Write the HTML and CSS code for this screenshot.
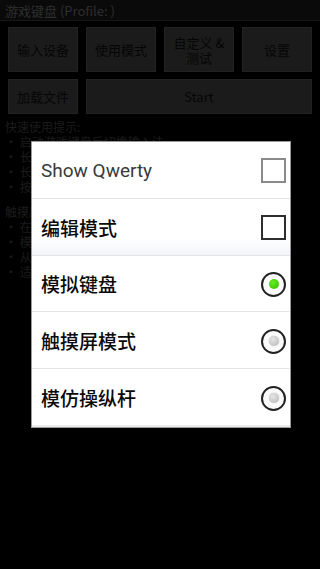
FILE: index.html
```html
<!DOCTYPE html>
<html>
<head>
<meta charset="utf-8">
<link rel="stylesheet" href="styles.css">
</head>
<body>
<div class="app">
  <div class="titlebar">游戏键盘 (Profile: )</div>
  <div class="buttons">
    <div class="row">
      <div class="btn">输入设备</div>
      <div class="btn">使用模式</div>
      <div class="btn">自定义 &amp;<br>测试</div>
      <div class="btn">设置</div>
    </div>
    <div class="row row2">
      <div class="btn">加载文件</div>
      <div class="btn wide">Start</div>
    </div>
  </div>
  <div class="hints">
    <div class="hline">快速使用提示:</div>
    <div class="hline">• 启动游戏键盘后切换输入法</div>
    <div class="hline">• 长按屏幕按键可以编辑</div>
    <div class="hline">• 长按菜单键显示隐藏键盘</div>
    <div class="hline">• 按返回键退出</div>
    <div class="hline gap">触摸屏模式:</div>
    <div class="hline">• 在屏幕上设置触摸点 (需要root权限)</div>
    <div class="hline">• 模拟触摸屏操作</div>
    <div class="hline">• 从设置中选择</div>
    <div class="hline">• 适用于部分游戏</div>
  </div>
</div>

<div class="dialog">
  <div class="item">
    <span class="label latin">Show Qwerty</span>
    <span class="check light"></span>
  </div>
  <div class="item tint">
    <span class="label">编辑模式</span>
    <span class="check dark"></span>
  </div>
  <div class="item">
    <span class="label">模拟键盘</span>
    <span class="radio on"><span class="dot"></span></span>
  </div>
  <div class="item">
    <span class="label">触摸屏模式</span>
    <span class="radio"><span class="dot"></span></span>
  </div>
  <div class="item last">
    <span class="label">模仿操纵杆</span>
    <span class="radio"><span class="dot"></span></span>
  </div>
</div>
</body>
</html>
```
FILE: styles.css
```css
* { box-sizing: border-box; }
html, body {
  margin: 0;
  padding: 0;
  width: 320px;
  height: 569px;
  background: #000;
  overflow: hidden;
  font-family: "Noto Sans CJK SC", "Noto Sans", sans-serif;
}
.app {
  width: 320px;
  height: 569px;
  background: #000;
}
.titlebar {
  height: 21px;
  padding: 2px 0 0 5px;
  font-size: 13px;
  line-height: 17px;
  color: #2e2e2e;
  background: #0a0a0a;
  border-bottom: 1px solid #161616;
}
.buttons {
  padding: 6px 8px 0 8px;
  display: flex;
  flex-direction: column;
  gap: 7px;
}
.row {
  display: flex;
  gap: 8px;
  height: 45px;
}
.row2 { height: 35px; }
.btn {
  width: 70px;
  background: #1b1b1b;
  border: 1px solid #222;
  color: #060606;
  font-size: 13px;
  line-height: 15px;
  display: flex;
  align-items: center;
  justify-content: center;
  text-align: center;
}
.btn.wide { flex: 1; }
.hints {
  padding: 5px 0 0 5px;
  font-size: 12px;
  line-height: 15px;
  color: #1c1c1c;
}
.hline.gap { margin-top: 10px; }

.dialog {
  position: absolute;
  left: 31px;
  top: 141px;
  width: 260px;
  height: 287px;
  background: #fff;
  border: 1px solid #9a9a9a;
  display: flex;
  flex-direction: column;
}
.item {
  flex: 1;
  display: flex;
  align-items: center;
  justify-content: space-between;
  padding: 2px 4px 0 9px;
  border-bottom: 1px solid #e4e4e4;
}
.item.tint { background: linear-gradient(#fff 70%, #f2f5f9); }
.item.last { border-bottom: 2px solid #ececec; }
.label {
  font-size: 19px;
  font-weight: 500;
  color: #0a0a0a;
  line-height: 24px;
}
.label.latin {
  font-family: Roboto, "Noto Sans", sans-serif;
  font-weight: 400;
  font-size: 19px;
  color: #3a3a3a;
}
.check {
  width: 25px;
  height: 25px;
  background: #fff;
}
.check.light { border: 2px solid #8a8a8a; }
.check.dark { border: 2px solid #2e2e2e; }
.radio {
  width: 25px;
  height: 25px;
  border-radius: 50%;
  border: 2px solid #222;
  background: #fafafa;
  display: flex;
  align-items: center;
  justify-content: center;
}
.dot {
  width: 10px;
  height: 10px;
  border-radius: 50%;
  background: radial-gradient(circle at 40% 35%, #e6e6e6, #b5b5b5);
  box-shadow: 0 0 1px #999;
}
.radio.on .dot {
  background: radial-gradient(circle at 40% 35%, #66ee22, #33bb00);
  box-shadow: none;
}
```
